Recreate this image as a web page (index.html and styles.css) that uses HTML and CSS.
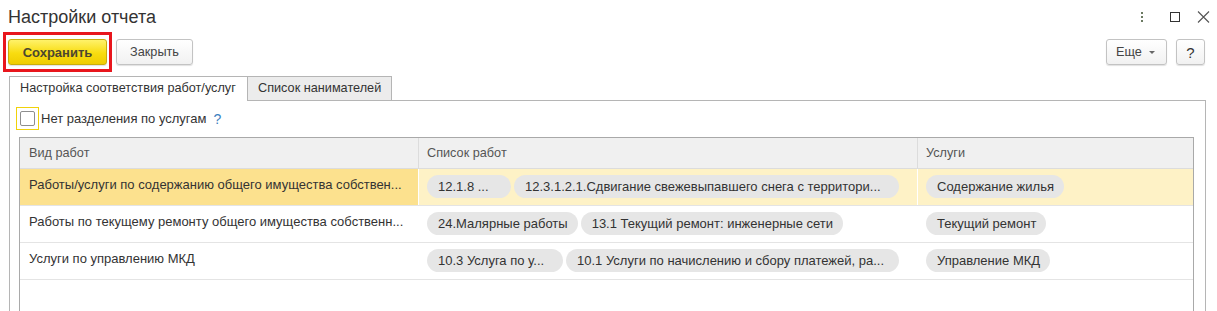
FILE: index.html
```html
<!DOCTYPE html>
<html lang="ru">
<head>
    <meta charset="UTF-8">
    <title>Настройки отчета</title>
    <link rel="stylesheet" href="styles.css">
</head>
<body>
    <div class="window">
        <div class="head">
            <h1 class="title">Настройки отчета</h1>
            <div class="win-btns">
                <span class="dots"><i></i><i></i><i></i></span>
                <span class="sq"></span>
                <svg class="close" width="13" height="12" viewBox="0 0 13 12"><path d="M1 0.5 L12 11.5 M12 0.5 L1 11.5" stroke="#555" stroke-width="1.1" fill="none"/></svg>
            </div>
        </div>
        <div class="toolbar">
            <div class="mark">
                <button class="btn btn-main">Сохранить</button>
            </div>
            <button class="btn btn-close">Закрыть</button>
            <div class="spacer"></div>
            <button class="btn btn-more">Еще <span class="arrow"></span></button>
            <button class="btn btn-help">?</button>
        </div>
        <div class="tabs">
            <div class="tab active">Настройка соответствия работ/услуг</div>
            <div class="tab">Список нанимателей</div>
            <div class="tab-rest"></div>
        </div>
        <div class="panel">
            <div class="check-row">
                <span class="check-focus"><span class="check"></span></span>
                <span class="check-label">Нет разделения по услугам</span>
                <span class="hint">?</span>
            </div>
            <div class="grid">
                <div class="grow ghead">
                    <div class="cell c1">Вид работ</div>
                    <div class="cell c2">Список работ</div>
                    <div class="cell c3">Услуги</div>
                </div>
                <div class="grow current">
                    <div class="cell c1 txt">Работы/услуги по содержанию общего имущества собствен...</div>
                    <div class="cell c2">
                        <span class="pill w84">12.1.8 ...</span>
                        <span class="pill w385">12.3.1.2.1.Сдвигание свежевыпавшего снега с территори...</span>
                    </div>
                    <div class="cell c3"><span class="pill">Содержание жилья</span></div>
                </div>
                <div class="grow">
                    <div class="cell c1 txt">Работы по текущему ремонту общего имущества собственн...</div>
                    <div class="cell c2">
                        <span class="pill">24.Малярные работы</span>
                        <span class="pill">13.1 Текущий ремонт: инженерные сети</span>
                    </div>
                    <div class="cell c3"><span class="pill">Текущий ремонт</span></div>
                </div>
                <div class="grow">
                    <div class="cell c1 txt">Услуги по управлению МКД</div>
                    <div class="cell c2">
                        <span class="pill w136">10.3 Услуга по у...</span>
                        <span class="pill w333">10.1 Услуги по начислению и сбору платежей, ра...</span>
                    </div>
                    <div class="cell c3"><span class="pill">Управление МКД</span></div>
                </div>
            </div>
        </div>
    </div>
</body>
</html>
```

FILE: styles.css
```css
*{
    margin: 0;
    padding: 0;
    box-sizing: border-box;
}
html,body{
    height: 100%;
    overflow: hidden;
    background: #fff;
}
body{
    font-family: "Liberation Sans", Arial, sans-serif;
    font-size: 13px;
    color: #333;
}
.window{
    display: flex;
    flex-direction: column;
    height: 100%;
}
.head{
    display: flex;
    align-items: center;
    height: 32px;
    padding: 0 7px 0 8px;
}
.title{
    font-size: 18px;
    font-weight: normal;
    color: #333;
    flex: 1;
    padding-top: 2px;
}
.win-btns{
    display: flex;
    align-items: center;
    padding-top: 2px;
}
.dots{
    display: flex;
    flex-direction: column;
    gap: 2px;
    width: 4px;
    margin-right: 26px;
}
.dots i{
    display: block;
    width: 2px;
    height: 2px;
    background: #6b7a62;
    margin-left: 1px;
}
.sq{
    display: block;
    width: 10px;
    height: 10px;
    border: 1px solid #333;
    margin-right: 17px;
}
.close{
    display: block;
}
.toolbar{
    display: flex;
    align-items: center;
    padding: 0 12px 0 3px;
    height: 40px;
}
.mark{
    border: 3px solid #e8161d;
    padding: 4px 2px;
    height: 40px;
}
.btn{
    font-family: "Liberation Sans", Arial, sans-serif;
    font-size: 12.7px;
    height: 26px;
    border: 1px solid #c3c3c3;
    border-radius: 3px;
    background: linear-gradient(#ffffff, #f1f1f1);
    color: #444;
    box-shadow: 0 1px 1px rgba(0,0,0,0.12);
    cursor: pointer;
}
.btn-main{
    width: 99px;
    font-weight: bold;
    font-size: 13px;
    color: #4b4630;
    background: linear-gradient(#fff26a, #f8dc10 55%, #efcc00);
    border-color: #c9ad0c;
}
.btn-close{
    width: 77px;
    margin-left: 4px;
}
.spacer{
    flex: 1;
}
.btn-more{
    width: 61px;
    padding-left: 9px;
    text-align: left;
}
.arrow{
    display: inline-block;
    width: 0;
    height: 0;
    border-left: 3px solid transparent;
    border-right: 3px solid transparent;
    border-top: 3px solid #666;
    vertical-align: middle;
    margin-left: 4px;
}
.btn-help{
    width: 29px;
    margin-left: 9px;
    font-size: 15px;
    color: #333;
}
.tabs{
    display: flex;
    align-items: flex-end;
    margin-top: 4px;
    padding-left: 9px;
    padding-right: 11px;
    height: 25px;
    font-size: 12.7px;
}
.tab{
    height: 25px;
    line-height: 23px;
    padding: 0 10px;
    border: 1px solid #b5b5b5;
    border-bottom: none;
    background: #ececec;
    color: #333;
    white-space: nowrap;
}
.tab.active{
    background: #fff;
    width: 238px;
    padding-left: 10px;
    border-right: none;
}
.tab + .tab{
    width: 145px;
    padding-left: 10px;
    border-bottom: 1px solid #b5b5b5;
}
.tab-rest{
    flex: 1;
    height: 1px;
    background: #b5b5b5;
}
.panel{
    flex: 1;
    margin: 0 11px 0 9px;
    border-left: 1px solid #b5b5b5;
    border-right: 1px solid #b5b5b5;
    padding: 6px 11px 0 9px;
    display: flex;
    flex-direction: column;
}
.check-row{
    display: flex;
    align-items: center;
    height: 23px;
}
.check-focus{
    display: flex;
    align-items: center;
    justify-content: center;
    width: 23px;
    height: 23px;
    border: 1px solid #f0d20a;
    margin-left: -3px;
}
.check{
    display: block;
    width: 15px;
    height: 15px;
    border: 1px solid #8e8e8e;
    border-radius: 2px;
    background: #fff;
}
.check-label{
    margin-left: 2px;
    color: #333;
}
.hint{
    margin-left: 7px;
    color: #3d7fc0;
    font-size: 14px;
}
.grid{
    flex: 1;
    margin-top: 7px;
    border: 1px solid #a9a9a9;
    border-bottom: none;
}
.grow{
    display: flex;
    height: 37px;
    border-bottom: 1px solid #e4e4e4;
}
.ghead{
    height: 31px;
    background: #f0f0f0;
    border-bottom: 1px solid #dcdcdc;
    color: #555;
    font-size: 12.7px;
}
.cell{
    padding: 6px 8px 0;
    display: flex;
    align-items: flex-start;
    gap: 3px;
    white-space: nowrap;
    overflow: hidden;
}
.ghead .cell{
    align-items: center;
    padding-top: 0;
}
.c1{
    width: 398px;
}
.c2{
    width: 499px;
    border-left: 1px solid #fff;
}
.c3{
    flex: 1;
    border-left: 1px solid #fff;
}
.ghead .c2,
.ghead .c3{
    border-left-color: #dcdcdc;
}
.cell.txt{
    padding-top: 8px;
    padding-left: 9px;
    line-height: 16px;
}
.ghead .c1{
    padding-left: 9px;
}
.current{
    background: #fef2c6;
}
.current .c1{
    background: #fce18e;
}
.pill{
    display: inline-block;
    height: 23px;
    line-height: 23px;
    padding: 0 10px 0 11px;
    border-radius: 12px;
    background: #e6e6e6;
    color: #333;
    white-space: nowrap;
    overflow: hidden;
}
.w84{ width: 84px; }
.w385{ width: 385px; }
.w136{ width: 136px; }
.w333{ width: 333px; }
```
